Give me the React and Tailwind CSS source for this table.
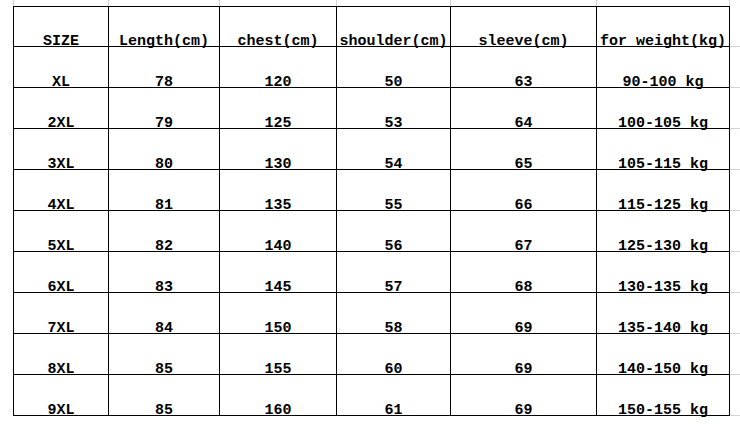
const cols = [
  { label: 'SIZE', w: 'w-[96px]' },
  { label: 'Length(cm)', w: 'w-[111px]' },
  { label: 'chest(cm)', w: 'w-[117px]' },
  { label: 'shoulder(cm)', w: 'w-[114px]' },
  { label: 'sleeve(cm)', w: 'w-[146px]' },
  { label: 'for weight(kg)', w: 'w-[133px]' },
]

const rows = [
  ['XL', '78', '120', '50', '63', '90-100 kg'],
  ['2XL', '79', '125', '53', '64', '100-105 kg'],
  ['3XL', '80', '130', '54', '65', '105-115 kg'],
  ['4XL', '81', '135', '55', '66', '115-125 kg'],
  ['5XL', '82', '140', '56', '67', '125-130 kg'],
  ['6XL', '83', '145', '57', '68', '130-135 kg'],
  ['7XL', '84', '150', '58', '69', '135-140 kg'],
  ['8XL', '85', '155', '60', '69', '140-150 kg'],
  ['9XL', '85', '160', '61', '69', '150-155 kg'],
]

function Row({ cells, first }) {
  return (
    <div className="flex h-[41px]">
      <div className="w-[13px] shrink-0" />
      {cells.map((c, i) => (
        <div
          key={i}
          className={`${cols[i].w} shrink-0 flex items-end justify-center border-r border-b border-black ${i === 0 ? 'border-l' : ''} ${first ? 'border-t' : ''}`}
        >
          <span className="leading-none whitespace-pre mb-[-3px]">{c}</span>
        </div>
      ))}
      <div className="flex-1 border-b border-[#d4d4d4]" />
    </div>
  )
}

export default function App() {
  return (
    <div
      className="w-[740px] h-[425px] bg-white text-black text-[15px] font-bold overflow-hidden"
      style={{ fontFamily: '"Liberation Mono", "DejaVu Sans Mono", monospace' }}
    >
      {/* spreadsheet gridlines above the table */}
      <div className="flex h-[6px]">
        <div className="w-[13px] shrink-0" />
        {cols.map((c, i) => (
          <div key={i} className={`${c.w} shrink-0 border-r border-[#d4d4d4] ${i === 0 ? 'border-l' : ''}`} />
        ))}
      </div>
      <Row cells={cols.map(c => c.label)} first />
      {rows.map(r => (
        <Row key={r[0]} cells={r} />
      ))}
    </div>
  )
}
